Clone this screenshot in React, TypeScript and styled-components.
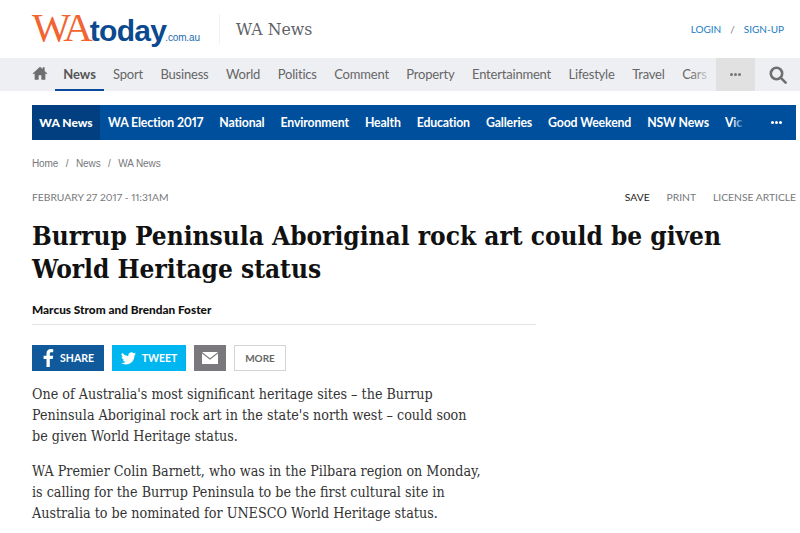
import styled, { createGlobalStyle } from 'styled-components'

const primaryLinks = ['Sport', 'Business', 'World', 'Politics', 'Comment', 'Property', 'Entertainment', 'Lifestyle', 'Travel', 'Cars']
const sectionLinks = ['WA Election 2017', 'National', 'Environment', 'Health', 'Education', 'Galleries', 'Good Weekend', 'NSW News', 'Vic']

export default function App() {
  return (
    <Page>
      <GlobalStyle />
      <Header>
        <Logo>
          <LogoWa>WA</LogoWa>
          <LogoToday>today</LogoToday>
          <LogoDomain>.com.au</LogoDomain>
        </Logo>
        <SectionName>WA News</SectionName>
        <Account>
          <a>LOGIN</a>
          <span>/</span>
          <a>SIGN-UP</a>
        </Account>
      </Header>

      <PrimaryNav>
        <HomeIcon viewBox="0 0 24 24">
          <path d="M12 2.5 1 12.6l1.3 1.4L4 12.5V22h6v-6.5h4V22h6v-9.500l1.700 1.500 1.300-1.400-4-3.700V3.500h-3v2.600z" />
        </HomeIcon>
        <ActiveLink>News</ActiveLink>
        <PrimaryLinks>
          {primaryLinks.map(link => (
            <PrimaryLink key={link}>{link}</PrimaryLink>
          ))}
        </PrimaryLinks>
        <MoreBox>
          <Dots $color="#777" />
        </MoreBox>
        <SearchBox>
          <svg width="18" height="18" viewBox="0 0 18 18" fill="none" stroke="#6f6f6f" strokeWidth="2.600">
            <circle cx="7.500" cy="7.500" r="5.700" />
            <path d="m11.600 11.600 5 5" strokeLinecap="round" />
          </svg>
        </SearchBox>
      </PrimaryNav>

      <SectionNav>
        <SectionActive>WA News</SectionActive>
        <SectionLinks>
          {sectionLinks.map(link => (
            <SectionLink key={link}>{link}</SectionLink>
          ))}
        </SectionLinks>
        <SectionMore>
          <Dots $color="#fff" />
        </SectionMore>
      </SectionNav>

      <Breadcrumbs>
        <span>Home</span>
        <i>/</i>
        <span>News</span>
        <i>/</i>
        <span>WA News</span>
      </Breadcrumbs>

      <MetaRow>
        <time>FEBRUARY 27 2017 - 11:31AM</time>
        <MetaActions>
          <SaveAction>SAVE</SaveAction>
          <span>PRINT</span>
          <span>LICENSE ARTICLE</span>
        </MetaActions>
      </MetaRow>

      <Headline>
        Burrup Peninsula Aboriginal rock art could be given
        <br />
        World Heritage status
      </Headline>

      <Byline>Marcus Strom and Brendan Foster</Byline>

      <ShareRow>
        <ShareButton $bg="#105a9c" $width={72}>
          <svg width="12" height="18" viewBox="0 0 12 18" fill="#fff">
            <path d="M7.800 18V10h2.900l.5-3.300H7.800V4.800c0-1 .3-1.600 1.600-1.600h1.800V.2C10.900.1 9.900 0 8.800 0 6.300 0 4.500 1.600 4.500 4.400v2.300H1.600V10h2.900v8z" />
          </svg>
          SHARE
        </ShareButton>
        <ShareButton $bg="#00b6f1" $width={74}>
          <svg width="15" height="13" viewBox="0 0 24 20" fill="#fff">
            <path d="M24 2.400a9.800 9.800 0 0 1-2.800.8A5 5 0 0 0 23.300.500a9.800 9.800 0 0 1-3.100 1.200 4.900 4.900 0 0 0-8.400 4.500A14 14 0 0 1 1.700.900a4.900 4.900 0 0 0 1.500 6.600 4.900 4.900 0 0 1-2.200-.6c0 2.400 1.700 4.400 3.900 4.900a4.900 4.900 0 0 1-2.200.1 4.900 4.900 0 0 0 4.600 3.400A9.900 9.900 0 0 1 0 17.300 14 14 0 0 0 7.500 19.500c9.100 0 14.100-7.500 14.100-14v-.6A10 10 0 0 0 24 2.400z" />
          </svg>
          TWEET
        </ShareButton>
        <MailButton>
          <svg width="16" height="12" viewBox="0 0 16 12" fill="#fff">
            <path d="M0 0h16L8 6.200zM0 1.600l8 6.200 8-6.200V12H0z" />
          </svg>
        </MailButton>
        <MoreButton>MORE</MoreButton>
      </ShareRow>

      <Body>
        <p>
          One of Australia's most significant heritage sites – the Burrup
          <br />
          Peninsula Aboriginal rock art in the state's north west – could soon
          <br />
          be given World Heritage status.
        </p>
        <p>
          WA Premier Colin Barnett, who was in the Pilbara region on Monday,
          <br />
          is calling for the Burrup Peninsula to be the first cultural site in
          <br />
          Australia to be nominated for UNESCO World Heritage status.
        </p>
      </Body>
    </Page>
  )
}

// ----- STYLES -----

const sans = `Lato, "Noto Sans", sans-serif`
const serif = `"DejaVu Serif Condensed", "DejaVu Serif", "Liberation Serif", serif`

const GlobalStyle = createGlobalStyle`
  html, body {
    margin: 0;
    background: #fff;
    overflow: hidden;
  }
`

const Page = styled.div`
  width: 800px;
  height: 533px;
  overflow: hidden;
  font-family: ${sans};
  font-variant-numeric: proportional-nums;
`

const Header = styled.header`
  height: 58px;
  padding: 0 16px 0 32px;
  display: flex;
  align-items: center;
`

const Logo = styled.div`
  display: flex;
  align-items: baseline;
  width: 187px;
  height: 40px;
  margin-top: -4px;
  white-space: nowrap;
`

const LogoWa = styled.span`
  font-family: 'Liberation Serif', serif;
  font-size: 41px;
  line-height: 40px;
  letter-spacing: -3px;
  color: #f26430;
`

const LogoToday = styled.span`
  font-family: 'Liberation Sans', sans-serif;
  font-size: 30px;
  font-weight: 700;
  letter-spacing: -0.700px;
  color: #0b4a8f;
`

const LogoDomain = styled.span`
  margin-left: -1px;
  font-family: 'Liberation Sans', sans-serif;
  font-size: 10px;
  letter-spacing: -0.150px;
  color: #1f6cb0;
`

const SectionName = styled.div`
  height: 30px;
  line-height: 30px;
  padding-left: 16px;
  border-left: 1px solid #f0f0f0;
  font-family: ${serif};
  font-size: 17.500px;
  color: #5f6368;
  white-space: nowrap;
`

const Account = styled.div`
  margin-left: auto;
  display: flex;
  gap: 9px;
  font-size: 10px;
  color: #1a7cc4;

  span {
    color: #777;
  }
`

const PrimaryNav = styled.nav`
  height: 33px;
  background: #eeeff3;
  padding-left: 32px;
  display: flex;
  align-items: stretch;
`

const HomeIcon = styled.svg`
  width: 16px;
  height: 16px;
  fill: #6e6e6e;
  margin: 7px 7px 0 0;
  flex: none;
`

const ActiveLink = styled.a`
  width: 49px;
  flex: none;
  box-sizing: border-box;
  text-align: center;
  line-height: 33px;
  font-size: 13px;
  font-weight: 700;
  color: #555;
  border-bottom: 2px solid #0b4a9f;
`

const PrimaryLinks = styled.div`
  position: relative;
  width: 612px;
  flex: none;
  padding-left: 9px;
  box-sizing: border-box;
  display: flex;
  gap: 17.500px;
  overflow: hidden;

  &::after {
    content: '';
    position: absolute;
    top: 0;
    right: 0;
    bottom: 0;
    width: 26px;
    background: linear-gradient(to right, rgba(238, 239, 243, 0), #eeeff3 90%);
  }
`

const PrimaryLink = styled.a`
  line-height: 33px;
  font-size: 13px;
  letter-spacing: -0.200px;
  color: #666;
  white-space: nowrap;
`

const MoreBox = styled.div`
  width: 39px;
  flex: none;
  background: #e1e1e2;
  display: flex;
  align-items: center;
  justify-content: center;
`

const SearchBox = styled.div`
  flex: 1;
  display: flex;
  align-items: center;
  justify-content: center;
`

const Dots = styled.span<{ $color: string }>`
  width: 3px;
  height: 3px;
  border-radius: 50%;
  background: ${({ $color }) => $color};
  box-shadow: -4px 0 0 ${({ $color }) => $color}, 4px 0 0 ${({ $color }) => $color};
`

const SectionNav = styled.nav`
  height: 35px;
  width: 764px;
  margin: 14px 0 0 32px;
  background: #004f9d;
  display: flex;
  align-items: stretch;
`

const SectionActive = styled.a`
  width: 68px;
  flex: none;
  background: #013f80;
  text-align: center;
  line-height: 35px;
  font-size: 12px;
  font-weight: 900;
  color: #fff;
`

const SectionLinks = styled.div`
  position: relative;
  flex: 1;
  padding-left: 8px;
  display: flex;
  gap: 16px;
  overflow: hidden;

  &::after {
    content: '';
    position: absolute;
    top: 0;
    right: 0;
    bottom: 0;
    width: 24px;
    background: linear-gradient(to right, rgba(0, 79, 157, 0), #004f9d 55%);
  }
`

const SectionLink = styled.a`
  line-height: 35px;
  font-size: 12.300px;
  letter-spacing: -0.150px;
  font-weight: 700;
  color: #fff;
  white-space: nowrap;
`

const SectionMore = styled.div`
  width: 40px;
  flex: none;
  display: flex;
  align-items: center;
  justify-content: center;
`

const Breadcrumbs = styled.div`
  margin: 17px 0 0 32px;
  height: 14px;
  line-height: 14px;
  display: flex;
  gap: 7.500px;
  font-family: 'Liberation Sans', sans-serif;
  font-size: 10px;
  letter-spacing: -0.100px;
  color: #77787c;

  i {
    font-style: normal;
  }
`

const MetaRow = styled.div`
  margin: 19px 4px 0 32px;
  height: 14px;
  line-height: 14px;
  display: flex;
  justify-content: space-between;
  font-size: 10.300px;
  color: #77787c;
`

const MetaActions = styled.div`
  display: flex;
  gap: 17px;
`

const SaveAction = styled.span`
  color: #222;
`

const Headline = styled.h1`
  margin: 16px 0 0 32px;
  font-family: ${serif};
  font-size: 26px;
  line-height: 33px;
  font-weight: 700;
  color: #111;
  white-space: nowrap;
`

const Byline = styled.div`
  margin: 16px 0 0 32px;
  width: 504px;
  height: 23px;
  line-height: 16px;
  box-sizing: border-box;
  border-bottom: 1px solid #e3e3e3;
  font-size: 11.800px;
  font-weight: 900;
  color: #111;
`

const ShareRow = styled.div`
  margin: 20px 0 0 32px;
  height: 26px;
  display: flex;
  gap: 8px;
`

const ShareButton = styled.a<{ $bg: string; $width: number }>`
  width: ${({ $width }) => $width}px;
  background: ${({ $bg }) => $bg};
  display: flex;
  align-items: center;
  justify-content: center;
  gap: 6px;
  font-size: 10.500px;
  font-weight: 700;
  color: #fff;
`

const MailButton = styled.a`
  width: 32px;
  background: #7a787d;
  display: flex;
  align-items: center;
  justify-content: center;
`

const MoreButton = styled.a`
  width: 52px;
  box-sizing: border-box;
  border: 1px solid #d4d4d4;
  display: flex;
  align-items: center;
  justify-content: center;
  font-size: 10px;
  font-weight: 700;
  color: #666;
`

const Body = styled.div`
  margin: 13px 0 0 32px;
  font-family: ${serif};
  font-size: 14.200px;
  line-height: 21px;
  color: #333;
  white-space: nowrap;

  p {
    margin: 0 0 14px;
  }
`
